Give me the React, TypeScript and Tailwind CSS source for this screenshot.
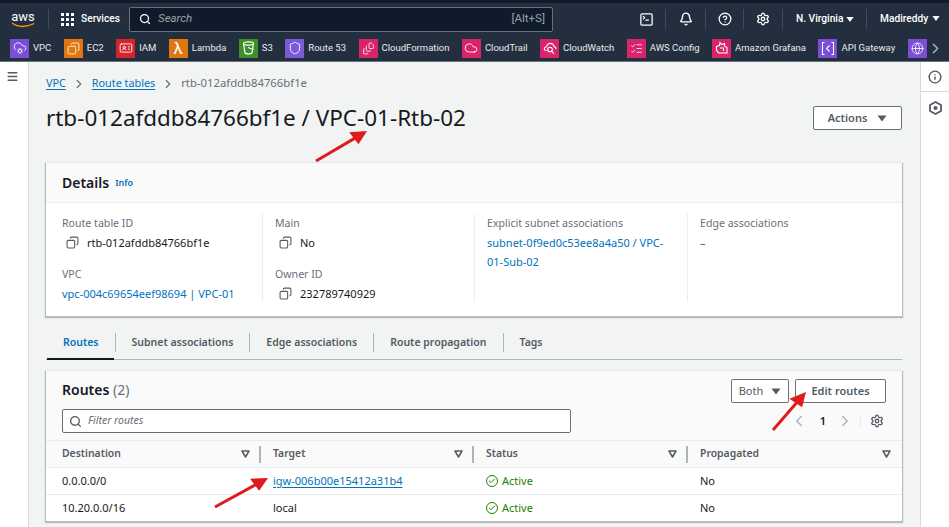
import type { ReactNode } from "react";
import {
  Bell,
  Check,
  ChevronLeft,
  ChevronRight,
  Cloud,
  CloudCog,
  Copy,
  FileStack,
  Globe,
  IdCard,
  Menu,
  Search,
  Settings,
  Shield,
  SquareTerminal,
  CircleHelp,
  Info,
  ListChecks,
} from "lucide-react";

const font = { fontFamily: '"Noto Sans", "Open Sans", sans-serif' };
const navFont = { fontFamily: 'Roboto, "Noto Sans", sans-serif' };

function BucketIcon() {
  return (
    <svg width="13" height="14" viewBox="0 0 13 14" fill="none" stroke="currentColor" strokeWidth="1.2">
      <ellipse cx="6.5" cy="2.5" rx="5" ry="1.6" />
      <path d="M1.5 2.5L3 12c.4 1.2 6.6 1.2 7 0l1.5-9.5" />
      <path d="M6 6.5l5.5 2" />
    </svg>
  );
}

function WatchIcon() {
  return (
    <svg width="14" height="14" viewBox="0 0 14 14" fill="none" stroke="currentColor" strokeWidth="1.1">
      <path d="M3.5 9.5C1.5 9.5 1 8 1.5 7 2 6 3 5.8 3.5 5.8 4 3 7 1.5 9.5 3c1 .6 1.5 1.6 1.5 2.5 1.5.3 2 1.5 1.8 2.5" />
      <circle cx="7" cy="8.5" r="2.3" />
      <path d="M8.7 10.2l2.3 2.6" />
    </svg>
  );
}

function ApiIcon() {
  return (
    <svg width="14" height="15" viewBox="0 0 14 15" fill="none" stroke="currentColor" strokeWidth="1.1">
      <path d="M3.5 1.5H1.5v12h2" />
      <path d="M10.5 1.5h2v12h-2" />
      <path d="M8.5 4.5L5.5 7.5l3 3" />
    </svg>
  );
}

function GrafanaIcon() {
  return (
    <svg width="14" height="14" viewBox="0 0 14 14" fill="none" stroke="currentColor" strokeWidth="1.1">
      <path d="M5 1.5l1.5 2 3-1v2.500l2.500 1.500v5.500H3.500L1.500 9V5.500l3-1z" />
      <path d="M5 7h3.500v3" />
    </svg>
  );
}

const favorites: { label: string; color: string; icon: ReactNode }[] = [
  { label: "VPC", color: "bg-[#7a4ed6]", icon: <CloudCog size={14} strokeWidth={1.5} /> },
  { label: "EC2", color: "bg-[#e0760f]", icon: <Copy size={13} strokeWidth={1.5} className="-scale-x-100" /> },
  { label: "IAM", color: "bg-[#d6242d]", icon: <IdCard size={14} strokeWidth={1.5} /> },
  { label: "Lambda", color: "bg-[#e0760f]", icon: <span className="text-[17px] leading-none">λ</span> },
  { label: "S3", color: "bg-[#3f8f29]", icon: <BucketIcon /> },
  { label: "Route 53", color: "bg-[#7b5ad8]", icon: <Shield size={14} strokeWidth={1.5} /> },
  { label: "CloudFormation", color: "bg-[#d8246a]", icon: <FileStack size={13} strokeWidth={1.5} /> },
  { label: "CloudTrail", color: "bg-[#d8246a]", icon: <Cloud size={14} strokeWidth={1.5} /> },
  { label: "CloudWatch", color: "bg-[#d8246a]", icon: <WatchIcon /> },
  { label: "AWS Config", color: "bg-[#d8246a]", icon: <ListChecks size={13} strokeWidth={1.5} /> },
  { label: "Amazon Grafana", color: "bg-[#d8246a]", icon: <GrafanaIcon /> },
  { label: "API Gateway", color: "bg-[#7a4ed6]", icon: <ApiIcon /> },
];

function Caret({ className }: { className: string }) {
  return (
    <svg width="10" height="7" viewBox="0 0 10 7" className={className}>
      <path d="M0.5 0.5h9L5 6.5z" fill="currentColor" />
    </svg>
  );
}

function SortIcon() {
  return (
    <svg width="9" height="8" viewBox="0 0 9 8" className="text-[#545b64]">
      <path d="M1 1h7L4.5 7z" fill="none" stroke="currentColor" strokeWidth="1.5" strokeLinejoin="round" />
    </svg>
  );
}

function Field({ label, children }: { label: string; children: ReactNode }) {
  return (
    <div>
      <div className="text-[#687078] h-[19px] leading-[19px] text-[10.6px]">{label}</div>
      <div className="leading-[19px]">{children}</div>
    </div>
  );
}

function CopyValue({ value }: { value: string }) {
  return (
    <div className="flex items-center h-[19px] pl-[4px] gap-[8px] text-[#16191f]">
      <Copy size={13} className="text-[#545b64] -scale-x-100" strokeWidth={2} />
      <span>{value}</span>
    </div>
  );
}

function Arrow({ x1, y1, x2, y2 }: { x1: number; y1: number; x2: number; y2: number }) {
  const ang = Math.atan2(y2 - y1, x2 - x1);
  const deg = (ang * 180) / Math.PI;
  return (
    <svg className="absolute inset-0 pointer-events-none" width="949" height="527" viewBox="0 0 949 527">
      <line x1={x1} y1={y1} x2={x2 - 12 * Math.cos(ang)} y2={y2 - 12 * Math.sin(ang)} stroke="#e01b1b" strokeWidth="3" />
      <path d="M0 0L-16 -8L-14 7z" fill="#e01b1b" transform={`translate(${x2} ${y2}) rotate(${deg})`} />
    </svg>
  );
}

function Tab({ label, active }: { label: string; active?: boolean }) {
  return (
    <div className={`h-[19px] flex items-center px-[16px] text-[10.5px] font-semibold border-r border-[#aab7b8] last:border-r-0 ${active ? "text-[#0073bb]" : "text-[#545b64]"}`}>
      {label}
    </div>
  );
}

function Row({ dest, target, link }: { dest: string; target: string; link?: boolean }) {
  return (
    <div className="grid grid-cols-[211px_213px_214px_1fr] h-[27px] items-center border-t border-[#eaeded] text-[#16191f]">
      <div className="pl-[16px]">{dest}</div>
      <div className="pl-[16px]">
        {link ? <span className="text-[#0073bb] underline underline-offset-2">{target}</span> : target}
      </div>
      <div className="pl-[16px] flex items-center gap-[4px] text-[#1d8102]">
        <span className="w-[12px] h-[12px] rounded-full border-[1.5px] border-[#1d8102] flex items-center justify-center">
          <Check size={8} strokeWidth={3} />
        </span>
        Active
      </div>
      <div className="pl-[16px]">No</div>
    </div>
  );
}

function HeadCell({ label, last }: { label: string; last?: boolean }) {
  return (
    <div className="flex items-center justify-between pl-[16px] h-full">
      <span className="font-semibold text-[#545b64] text-[10.4px]">{label}</span>
      <div className={`flex items-center ${last ? "" : "-mr-[4px]"}`}>
        <SortIcon />
        {last ? <span className="w-[11px]" /> : <span className="ml-[9px] h-[17px] border-r-2 border-[#aab7b8]" />}
      </div>
    </div>
  );
}

function NavIcon({ children }: { children: ReactNode }) {
  return <div className="h-[20px] flex items-center justify-center border-r border-[#414d5c]">{children}</div>;
}

export default function App() {
  return (
    <div style={font} className="relative w-[949px] h-[527px] overflow-hidden bg-white text-[11px] flex flex-col">
      <div className="h-[3px] bg-[#0f1b2a]" />
      {/* top nav */}
      <div style={navFont} className="h-[32px] bg-[#232f3e] flex items-center text-white pl-[10px]">
        <div className="w-[26px] flex flex-col items-center leading-none">
          <span className="text-[13px] leading-[11px]">aws</span>
          <svg width="25" height="6" viewBox="0 0 25 6">
            <path d="M1 1c6 4.5 15 4.5 22 0.5" fill="none" stroke="#ff9900" strokeWidth="1.4" />
          </svg>
        </div>
        <div className="ml-[12px] mr-[12px] h-[20px] border-r border-[#414d5c]" />
        <div className="grid grid-cols-3 gap-[2px] w-[13px]">
          {Array.from({ length: 9 }).map((_, i) => (
            <span key={i} className="w-[3px] h-[3px] bg-white" />
          ))}
        </div>
        <span className="ml-[7px] text-[10.2px] font-medium w-[36px] whitespace-nowrap">Services</span>
        <div className="ml-[12px] w-[424px] h-[25px] bg-[#0f1b2a] border border-[#687078] rounded-[2px] flex items-center justify-between pl-[9px] pr-[7px] text-[#95a5a6]">
          <div className="flex items-center gap-[7px]">
            <Search size={12} className="text-white" strokeWidth={2.5} />
            <span className="italic text-[11.5px]">Search</span>
          </div>
          <span className="text-[11.5px]">[Alt+S]</span>
        </div>
        <div className="ml-[74px] flex items-center text-[10.2px] font-medium">
          <div className="w-[39px]"><NavIcon><SquareTerminal size={15} strokeWidth={2} /></NavIcon></div>
          <div className="w-[40px]"><NavIcon><Bell size={14} strokeWidth={2.4} /></NavIcon></div>
          <div className="w-[38px]"><NavIcon><CircleHelp size={14} strokeWidth={2.2} /></NavIcon></div>
          <div className="w-[39px]"><NavIcon><Settings size={14} strokeWidth={2.2} /></NavIcon></div>
          <div className="w-[84px] h-[20px] pl-[13px] flex items-center gap-[3px] border-r border-[#414d5c] whitespace-nowrap">
            N. Virginia
            <Caret className="w-[8px]" />
          </div>
          <div className="pl-[13px] flex items-center gap-[4px] whitespace-nowrap">
            Madireddy
            <Caret className="w-[8px]" />
          </div>
        </div>
      </div>
      <div style={navFont} className="h-[26px] bg-[#232f3e] flex items-center pl-[10px] text-[9.5px] text-[#e9ebed]">
        <div className="flex items-center gap-[12.5px]">
          {favorites.map((f) => (
            <div key={f.label} className="flex items-center gap-[4px]">
              <span className={`w-[19px] h-[19px] flex items-center justify-center text-white ${f.color}`}>{f.icon}</span>
              <span className="whitespace-nowrap">{f.label}</span>
            </div>
          ))}
          <span className="w-[19px] h-[19px] flex items-center justify-center text-white bg-[#7a4ed6]">
            <Globe size={13} strokeWidth={1.5} />
          </span>
          <ChevronRight size={17} className="-ml-[12px] text-[#aab7b8]" />
        </div>
      </div>
      <div className="h-px bg-[#687078]" />

      <div className="flex-1 flex min-h-0">
        <div className="w-[29px] border-r border-[#d5dbdb] pl-[6px] pt-[8px]">
          <Menu size={13} strokeWidth={2.5} className="text-[#545b64]" />
        </div>
        <div className="flex-1 bg-[#f2f3f3] pl-[17px] pr-[18px]">
          {/* breadcrumb */}
          <div className="h-[25px] mt-[9px] flex items-center gap-[6px] text-[10.8px]">
            <span className="text-[#0073bb] underline underline-offset-2">VPC</span>
            <ChevronRight size={14} className="text-[#687078]" />
            <span className="text-[#0073bb] underline underline-offset-2">Route tables</span>
            <ChevronRight size={14} className="text-[#687078]" />
            <span className="text-[#687078] text-[11.3px]">rtb-012afddb84766bf1e</span>
          </div>
          <div className="flex justify-between items-center mt-[5px] h-[34px]">
            <h1 className="text-[22.45px] text-[#16191f] leading-none whitespace-nowrap">rtb-012afddb84766bf1e / VPC-01-Rtb-02</h1>
            <div className="w-[89px] h-[24px] bg-white border border-[#687078] rounded-[2px] flex items-center justify-center gap-[10px] font-semibold text-[#545b64]">
              Actions
              <Caret className="text-[#545b64]" />
            </div>
          </div>

          {/* details */}
          <div className="mt-[28px] h-[153px] bg-white shadow-[0_1px_1px_1px_rgba(0,28,36,0.25)]">
            <div className="h-[40px] bg-[#fafafa] border-b border-[#eaeded] flex items-center pl-[16px] gap-[6px]">
              <span className="text-[14px] font-semibold text-[#16191f]">Details</span>
              <span className="text-[9px] font-semibold text-[#0073bb]">Info</span>
            </div>
            <div className="grid grid-cols-[216px_212px_213px_1fr] pt-[11px]">
              <div className="pl-[16px] h-[88px] flex flex-col gap-[13px]">
                <Field label="Route table ID"><CopyValue value="rtb-012afddb84766bf1e" /></Field>
                <Field label="VPC"><span className="text-[#0073bb] whitespace-nowrap">vpc-004c69654eef98694 | VPC-01</span></Field>
              </div>
              <div className="pl-[12px] h-[88px] border-l border-[#eaeded] flex flex-col gap-[13px]">
                <Field label="Main"><CopyValue value="No" /></Field>
                <Field label="Owner ID"><CopyValue value="232789740929" /></Field>
              </div>
              <div className="pl-[12px] pr-[12px] h-[88px] border-l border-[#eaeded]">
                <Field label="Explicit subnet associations">
                  <span className="text-[#0073bb]">subnet-0f9ed0c53ee8a4a50 / VPC-01-Sub-02</span>
                </Field>
              </div>
              <div className="pl-[12px] h-[88px] border-l border-[#eaeded]">
                <Field label="Edge associations"><span className="text-[#545b64]">–</span></Field>
              </div>
            </div>
          </div>

          {/* tabs */}
          <div className="relative mt-[16px] h-[28px] pl-[1px] pt-[1px] flex border-b border-[#aab7b8]">
            <span className="absolute left-[1px] bottom-[-1px] w-[67px] h-[2px] bg-[#16191f]" />
            <Tab label="Routes" active />
            <Tab label="Subnet associations" />
            <Tab label="Edge associations" />
            <Tab label="Route propagation" />
            <Tab label="Tags" />
          </div>

          {/* routes table */}
          <div className="mt-[11px] h-[150px] bg-white shadow-[0_1px_1px_1px_rgba(0,28,36,0.25)]">
            <div className="h-[70px] bg-[#fafafa] border-b border-[#eaeded] relative pl-[16px] pt-[8px]">
              <div className="text-[14px] leading-[22px]">
                <span className="font-semibold text-[#16191f]">Routes</span> <span className="text-[#687078]">(2)</span>
              </div>
              <div className="mt-[8px] w-[509px] h-[24px] bg-white border border-[#687078] rounded-[2px] flex items-center pl-[6px] gap-[6px]">
                <Search size={13} className="text-[#545b64]" strokeWidth={2.5} />
                <span className="italic text-[#687078] text-[10.5px]">Filter routes</span>
              </div>
              <div className="absolute right-[16px] top-[8px] flex flex-col items-end gap-[8px]">
                <div className="flex gap-[6px]">
                  <div className="w-[58px] h-[24px] bg-white border border-[#687078] rounded-[2px] flex items-center justify-center gap-[8px] text-[#545b64]">
                    Both
                    <Caret className="text-[#545b64]" />
                  </div>
                  <div className="w-[91px] h-[24px] bg-white border border-[#687078] rounded-[2px] flex items-center justify-center font-semibold text-[#545b64]">
                    Edit routes
                  </div>
                </div>
                <div className="flex items-center h-[20px]">
                  <ChevronLeft size={18} className="text-[#aab7b8]" />
                  <span className="ml-[12px] mr-[10px] font-semibold text-[#16191f]">1</span>
                  <ChevronRight size={18} className="text-[#aab7b8]" />
                  <span className="ml-[6px] h-[14px] border-l border-[#eaeded]" />
                  <Settings size={14} className="ml-[9px] mr-[2px] text-[#545b64]" strokeWidth={2.2} />
                </div>
              </div>
            </div>
            <div className="grid grid-cols-[211px_213px_214px_1fr] h-[26px] bg-[#fafafa] items-center">
              <HeadCell label="Destination" />
              <HeadCell label="Target" />
              <HeadCell label="Status" />
              <HeadCell label="Propagated" last />
            </div>
            <Row dest="0.0.0.0/0" target="igw-006b00e15412a31b4" link />
            <Row dest="10.20.0.0/16" target="local" />
          </div>
        </div>
        <div className="w-[29px] border-l border-[#d5dbdb] flex flex-col items-center">
          <div className="h-[30px] w-full border-b border-[#d5dbdb] flex items-center justify-center">
            <Info size={14} className="text-[#545b64]" strokeWidth={2.4} />
          </div>
          <svg width="13" height="14" viewBox="0 0 13 14" className="mt-[9px] text-[#545b64]" fill="none" stroke="currentColor" strokeWidth="1.8">
            <path d="M6.5 1L12 4v6l-5.5 3L1 10V4z" strokeLinejoin="round" />
            <circle cx="6.5" cy="7" r="2" fill="currentColor" stroke="none" />
          </svg>
        </div>
      </div>

      {/* red annotation arrows */}
      <Arrow x1={316} y1={161} x2={367} y2={131} />
      <Arrow x1={773} y1={430} x2={806} y2={392} />
      <Arrow x1={215} y1={507} x2={268} y2={478} />
    </div>
  );
}
